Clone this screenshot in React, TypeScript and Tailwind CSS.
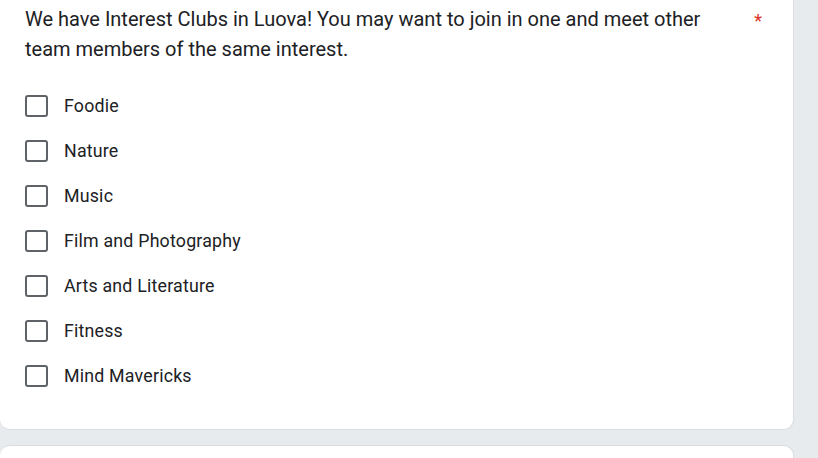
const clubs = [
  "Foodie",
  "Nature",
  "Music",
  "Film and Photography",
  "Arts and Literature",
  "Fitness",
  "Mind Mavericks",
]

function Checkbox() {
  return <span className="h-[22px] w-[23px] shrink-0 rounded-[3px] border-2 border-[#5f6368]" />
}

export default function App() {
  return (
    <div className="h-[458px] w-[818px] overflow-hidden bg-[#e8ebee] font-['Roboto',sans-serif]">
      <div className="w-[794px]">
        <div className="rounded-b-[10px] border border-t-0 border-l-0 border-[#dadce0] bg-white pb-[42px] pl-[25px] pr-[30px] pt-[4px]">
          <div className="flex items-start">
            <div className="w-[700px] text-[20px] leading-[30px] text-[#202124]">
              We have Interest Clubs in Luova! You may want to join in one and meet other team members of the same interest.
            </div>
            <span className="ml-auto pr-[1px] pt-[3px] text-[18px] leading-[28px] text-[#d93025]">*</span>
          </div>
          <div className="mt-[31px] flex flex-col gap-[23px]">
            {clubs.map((c) => (
              <label key={c} className="flex h-[22px] items-center">
                <Checkbox />
                <span className="ml-[16px] text-[17.8px] tracking-[0.2px] text-[#202124]">{c}</span>
              </label>
            ))}
          </div>
        </div>
        <div className="mt-[15px] h-[40px] rounded-t-[10px] border border-b-0 border-l-0 border-[#dadce0] bg-white" />
      </div>
    </div>
  )
}
